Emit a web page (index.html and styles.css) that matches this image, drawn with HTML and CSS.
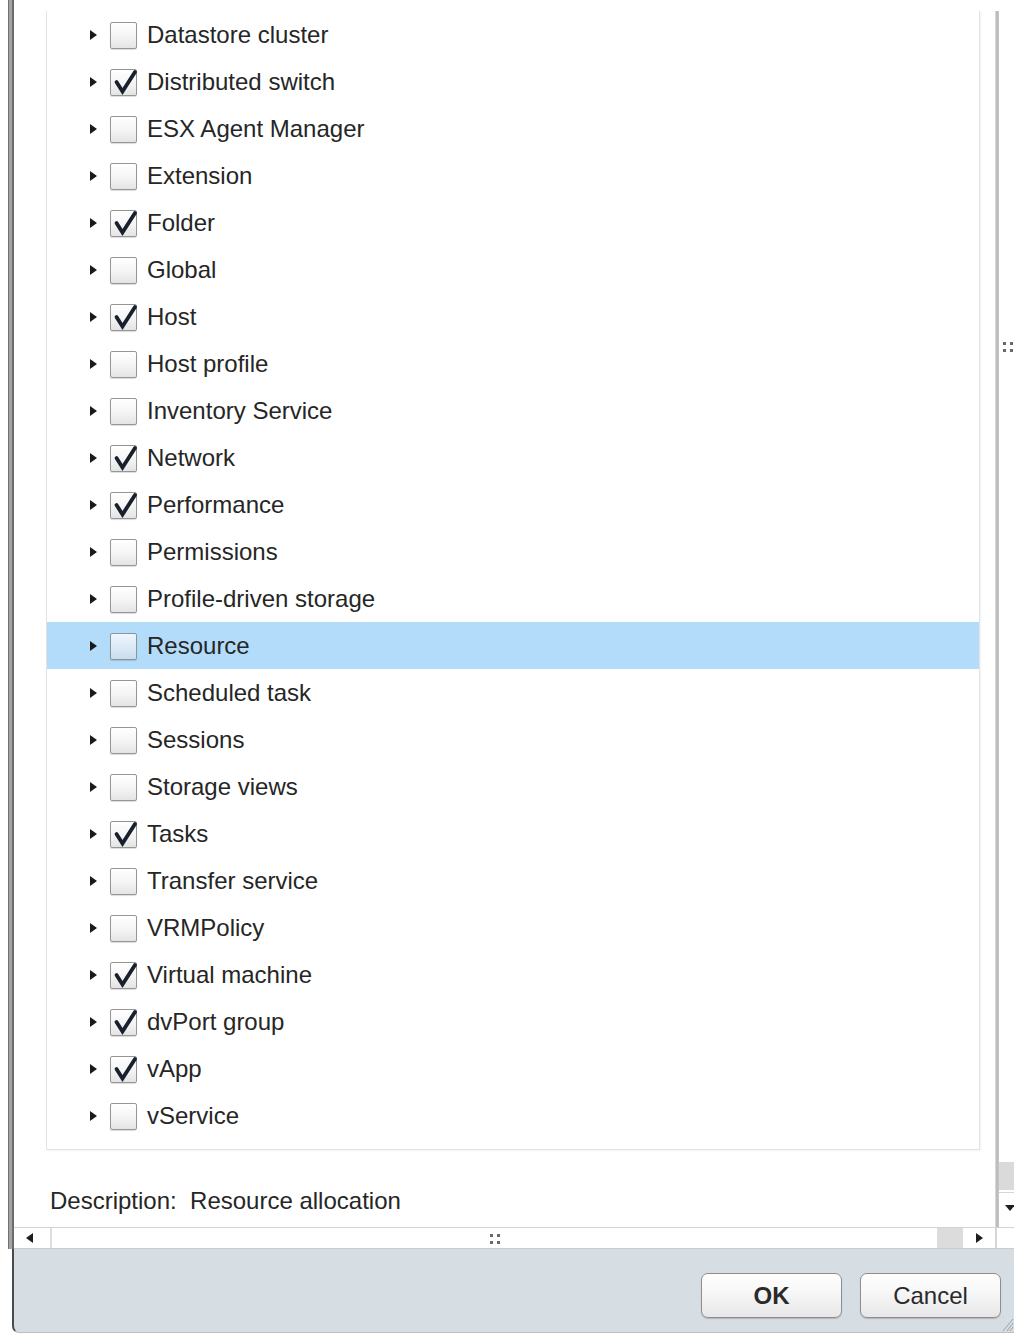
FILE: index.html
```html
<!DOCTYPE html>
<html lang="en">
<head>
<meta charset="utf-8">
<title>Edit Role</title>
<link rel="stylesheet" href="styles.css">
</head>
<body>
<div class="window">
  <div class="upper">
    <div class="pane">
      <div class="content">
        <ul class="tree">
          <li class="node"><span class="twisty"></span><span class="check"></span><span class="label">Datastore cluster</span></li>
          <li class="node"><span class="twisty"></span><span class="check on"><svg viewBox="0 0 27 27"><polyline points="6.5,13 12.5,22.5 25,3"/></svg></span><span class="label">Distributed switch</span></li>
          <li class="node"><span class="twisty"></span><span class="check"></span><span class="label">ESX Agent Manager</span></li>
          <li class="node"><span class="twisty"></span><span class="check"></span><span class="label">Extension</span></li>
          <li class="node"><span class="twisty"></span><span class="check on"><svg viewBox="0 0 27 27"><polyline points="6.5,13 12.5,22.5 25,3"/></svg></span><span class="label">Folder</span></li>
          <li class="node"><span class="twisty"></span><span class="check"></span><span class="label">Global</span></li>
          <li class="node"><span class="twisty"></span><span class="check on"><svg viewBox="0 0 27 27"><polyline points="6.5,13 12.5,22.5 25,3"/></svg></span><span class="label">Host</span></li>
          <li class="node"><span class="twisty"></span><span class="check"></span><span class="label">Host profile</span></li>
          <li class="node"><span class="twisty"></span><span class="check"></span><span class="label">Inventory Service</span></li>
          <li class="node"><span class="twisty"></span><span class="check on"><svg viewBox="0 0 27 27"><polyline points="6.5,13 12.5,22.5 25,3"/></svg></span><span class="label">Network</span></li>
          <li class="node"><span class="twisty"></span><span class="check on"><svg viewBox="0 0 27 27"><polyline points="6.5,13 12.5,22.5 25,3"/></svg></span><span class="label">Performance</span></li>
          <li class="node"><span class="twisty"></span><span class="check"></span><span class="label">Permissions</span></li>
          <li class="node"><span class="twisty"></span><span class="check"></span><span class="label">Profile-driven storage</span></li>
          <li class="node selected"><span class="twisty"></span><span class="check"></span><span class="label">Resource</span></li>
          <li class="node"><span class="twisty"></span><span class="check"></span><span class="label">Scheduled task</span></li>
          <li class="node"><span class="twisty"></span><span class="check"></span><span class="label">Sessions</span></li>
          <li class="node"><span class="twisty"></span><span class="check"></span><span class="label">Storage views</span></li>
          <li class="node"><span class="twisty"></span><span class="check on"><svg viewBox="0 0 27 27"><polyline points="6.5,13 12.5,22.5 25,3"/></svg></span><span class="label">Tasks</span></li>
          <li class="node"><span class="twisty"></span><span class="check"></span><span class="label">Transfer service</span></li>
          <li class="node"><span class="twisty"></span><span class="check"></span><span class="label">VRMPolicy</span></li>
          <li class="node"><span class="twisty"></span><span class="check on"><svg viewBox="0 0 27 27"><polyline points="6.5,13 12.5,22.5 25,3"/></svg></span><span class="label">Virtual machine</span></li>
          <li class="node"><span class="twisty"></span><span class="check on"><svg viewBox="0 0 27 27"><polyline points="6.5,13 12.5,22.5 25,3"/></svg></span><span class="label">dvPort group</span></li>
          <li class="node"><span class="twisty"></span><span class="check on"><svg viewBox="0 0 27 27"><polyline points="6.5,13 12.5,22.5 25,3"/></svg></span><span class="label">vApp</span></li>
          <li class="node"><span class="twisty"></span><span class="check"></span><span class="label">vService</span></li>
        </ul>
        <div class="desc">Description:&nbsp; Resource allocation</div>
      </div>
      <div class="splitter"></div>
      <div class="vscroll">
        <div class="vtrack"><span class="grip"></span></div>
        <div class="vthumb"></div>
        <div class="vbtn"><span class="arrow-down"></span></div>
      </div>
    </div>
    <div class="hscroll">
      <div class="hbtn left"><span class="arrow-left"></span></div>
      <div class="htrack"><span class="grip"></span></div>
      <div class="hthumb"></div>
      <div class="hbtn right"><span class="arrow-right"></span></div>
      <div class="hcorner"></div>
    </div>
  </div>
  <div class="footer">
    <button class="btn default">OK</button>
    <button class="btn">Cancel</button>
    <svg class="resize" viewBox="0 0 14 18"><path d="M13 5 L3 17 M13 9 L7 17 M13 13 L10 17"/></svg>
  </div>
</div>
</body>
</html>
```

FILE: styles.css
```css
* { box-sizing: border-box; }

html, body {
  margin: 0;
  padding: 0;
  background: #ffffff;
}

body {
  width: 1014px;
  height: 1335px;
  overflow: hidden;
  font-family: "Liberation Sans", Arial, sans-serif;
  font-size: 24px;
  color: #262626;
}

.window {
  margin-left: 8px;
  width: 1006px;
  height: 1333px;
  display: flex;
  flex-direction: column;
}

/* upper area with the grey frame strip on its left */
.upper {
  padding-left: 6px;
  background:
    linear-gradient(to right, #707070 0 1px, #a4a4a4 1px 4px, #6c6c6c 4px 6px) left top / 6px 100% no-repeat,
    #ffffff;
}

.pane {
  display: flex;
  height: 1227px;
}

.content {
  width: 981px;
  padding: 11px 15px 0 32px;
  display: flex;
  flex-direction: column;
}

/* privilege tree */
.tree {
  list-style: none;
  margin: 0;
  padding: 0 0 10px 0;
  height: 1139px;
  border: 1px solid #e3e3e3;
  border-top: none;
  box-shadow: 1px 1px 2px rgba(0, 0, 0, 0.05);
}

.node {
  height: 47px;
  display: flex;
  align-items: center;
  padding-left: 44px;
}

.node.selected {
  background: #b3dcfa;
}

.twisty {
  width: 0;
  height: 0;
  border-left: 7px solid #1a1a1a;
  border-top: 5px solid transparent;
  border-bottom: 5px solid transparent;
  margin-left: -1px;
  margin-right: 13px;
  margin-top: 1px;
}

.check {
  width: 27px;
  height: 27px;
  border: 1px solid #969696;
  border-radius: 2px;
  background: linear-gradient(#ffffff, #f4f4f4 55%, #e4e4e4);
  box-shadow: 0 1px 1px rgba(0, 0, 0, 0.14);
  margin-right: 10px;
  margin-top: 1px;
  position: relative;
  flex: none;
}

.node.selected .check {
  background: linear-gradient(#eef6fd, #dbe9f6 55%, #c8dced);
  border-color: #8c949b;
}

.check svg {
  position: absolute;
  left: -1px;
  top: -1px;
  width: 27px;
  height: 27px;
  overflow: visible;
}

.check polyline {
  fill: none;
  stroke: #17202c;
  stroke-width: 3.8;
  stroke-linecap: round;
  stroke-linejoin: miter;
}

.label {
  white-space: nowrap;
  line-height: 30px;
}

.desc {
  margin-top: 36px;
  margin-left: 4px;
  line-height: 30px;
  height: 30px;
  white-space: nowrap;
}

/* vertical divider between tree pane and scrollbar */
.splitter {
  width: 4px;
  margin-top: 11px;
  background: linear-gradient(to right, #e2e2e2, #b4b4b4 50%, #cdcdcd);
}

.vscroll {
  width: 15px;
  display: flex;
  flex-direction: column;
}

.vtrack {
  flex: 1;
  position: relative;
}

.vtrack .grip {
  position: absolute;
  left: 4px;
  top: 342px;
}

/* four-dot drag grip */
.grip {
  display: block;
  width: 3px;
  height: 3px;
  background: #6a6a6a;
  box-shadow: 7px 0 0 #6a6a6a, 0 7px 0 #6a6a6a, 7px 7px 0 #6a6a6a;
}

.vthumb {
  height: 28px;
  background: #dadada;
  margin-bottom: 2px;
}

.vbtn {
  height: 35px;
  border-top: 1px solid #d6d6d6;
  position: relative;
}

.arrow-down {
  position: absolute;
  left: 6px;
  top: 12px;
  width: 0;
  height: 0;
  border-top: 6px solid #1e1e1e;
  border-left: 5px solid transparent;
  border-right: 5px solid transparent;
}

/* horizontal scrollbar */
.hscroll {
  height: 22px;
  display: flex;
  border-top: 1px solid #d2d2d2;
  border-bottom: 1px solid #cbcbcb;
}

.hbtn {
  position: relative;
  background: #ffffff;
}

.hbtn.left {
  width: 38px;
  border-right: 2px solid #dedede;
}

.hbtn.right {
  width: 34px;
  border-right: 2px solid #d6d6d6;
}

.arrow-left {
  position: absolute;
  left: 12px;
  top: 5px;
  border-right: 7px solid #1e1e1e;
  border-top: 5px solid transparent;
  border-bottom: 5px solid transparent;
}

.arrow-right {
  position: absolute;
  left: 13px;
  top: 5px;
  border-left: 7px solid #1e1e1e;
  border-top: 5px solid transparent;
  border-bottom: 5px solid transparent;
}

.htrack {
  flex: 1;
  display: flex;
  justify-content: center;
  align-items: center;
}

.htrack .grip {
  margin-top: -6px;
  margin-left: -6px;
}

.hthumb {
  width: 26px;
  background: #dcdcdc;
}

.hcorner {
  width: 17px;
  background: #ffffff;
}

/* button bar */
.footer {
  flex: 1;
  margin-left: 4px;
  background: #d6dde3;
  border-left: 2px solid #4a4a4a;
  border-bottom: 1px solid #b9bec3;
  border-bottom-left-radius: 7px;
  display: flex;
  justify-content: flex-end;
  align-items: flex-start;
  gap: 18px;
  padding: 24px 13px 0 0;
  position: relative;
}

.btn {
  width: 141px;
  height: 45px;
  font-family: "Liberation Sans", Arial, sans-serif;
  font-size: 24px;
  color: #2a2a2a;
  border: 1px solid #8e8e8e;
  border-radius: 7px;
  background: linear-gradient(#ffffff, #f6f6f6 45%, #e7e7e7);
  box-shadow: 0 1px 1px rgba(0, 0, 0, 0.18);
  padding: 0;
}

.btn.default {
  font-weight: bold;
}

.resize {
  position: absolute;
  right: 0;
  bottom: 0;
  width: 14px;
  height: 18px;
}

.resize path {
  stroke: #9aa2a8;
  stroke-width: 1;
  fill: none;
}
```
